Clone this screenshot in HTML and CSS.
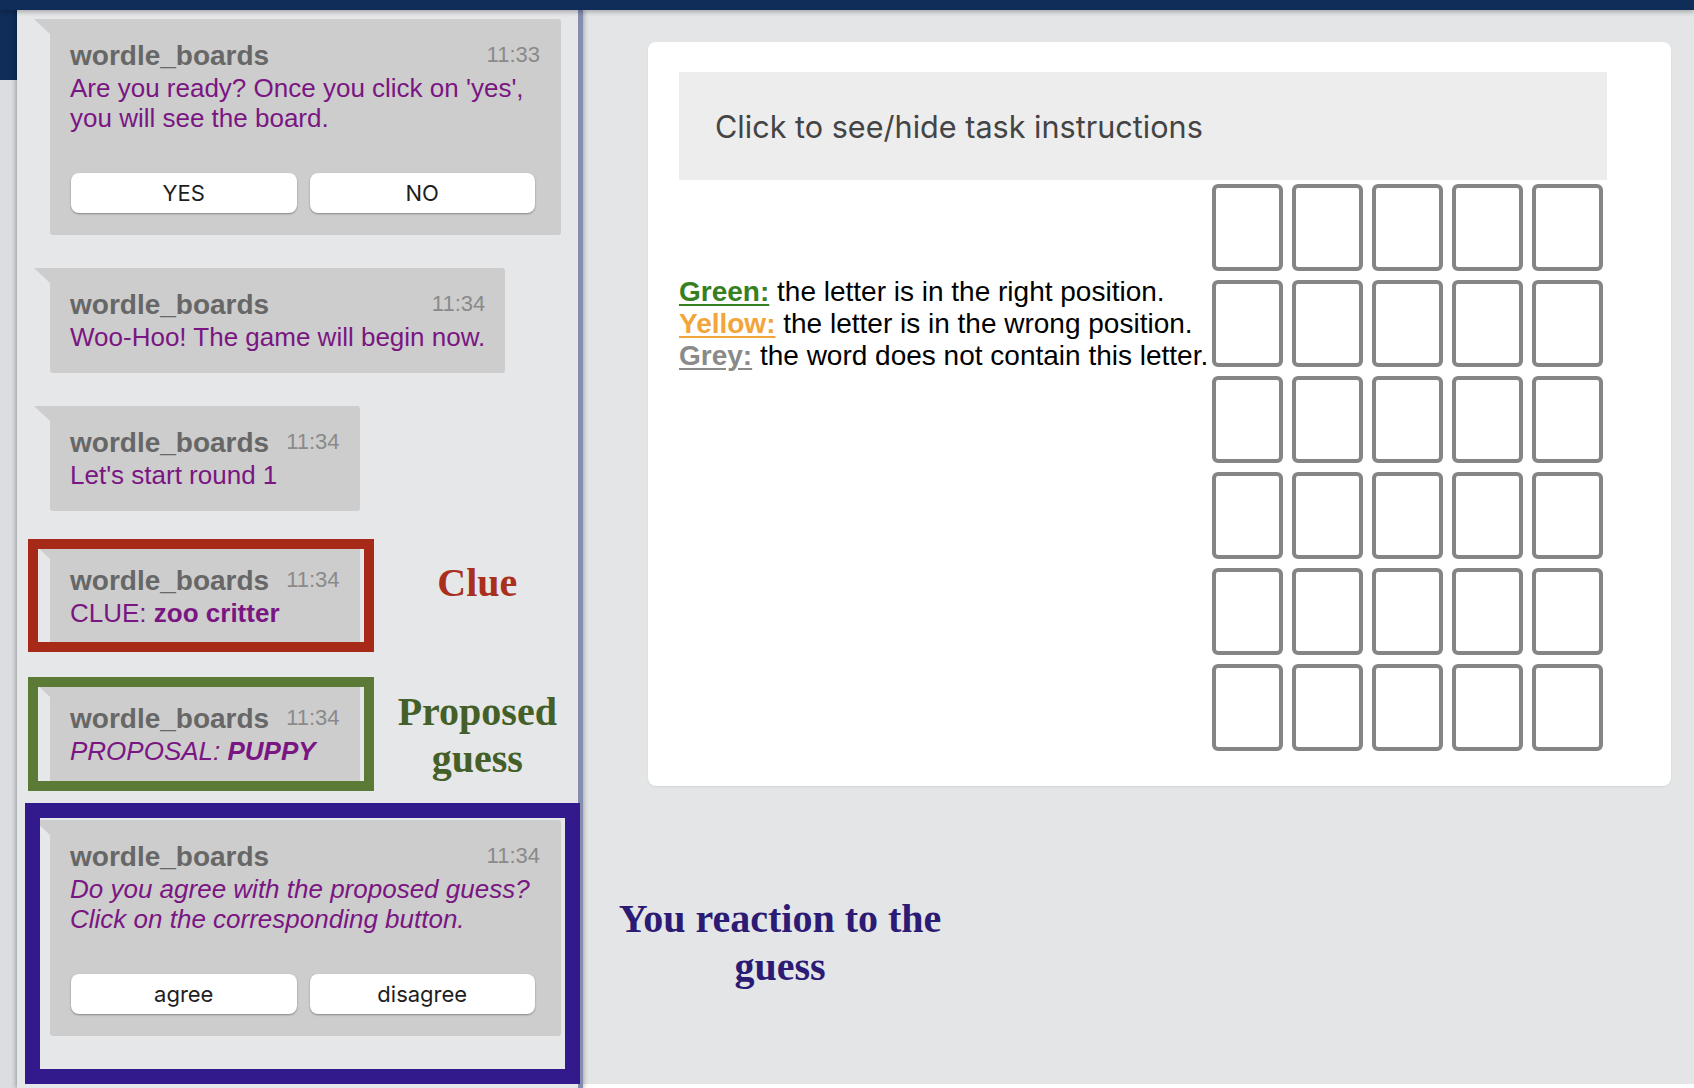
FILE: index.html
```html
<!DOCTYPE html>
<html lang="en">
<head>
<meta charset="utf-8">
<title>wordle_boards</title>
<link rel="stylesheet" href="styles.css">
</head>
<body>
<div class="topbar"></div>
<div class="layout">
  <div class="rail"><div class="rail-top"></div></div>
  <aside class="chat">
    <div class="msg">
      <div class="bubble full">
        <div class="head"><span class="name">wordle_boards</span><span class="time">11:33</span></div>
        <div class="text">Are you ready? Once you click on 'yes', you will see the board.</div>
        <div class="btns"><button class="btn">YES</button><button class="btn">NO</button></div>
      </div>
    </div>
    <div class="msg">
      <div class="bubble">
        <div class="head"><span class="name">wordle_boards</span><span class="time">11:34</span></div>
        <div class="text">Woo-Hoo! The game will begin now.</div>
      </div>
    </div>
    <div class="msg">
      <div class="bubble">
        <div class="head"><span class="name">wordle_boards</span><span class="time">11:34</span></div>
        <div class="text">Let's start round 1</div>
      </div>
    </div>
    <div class="msg">
      <div class="bubble">
        <div class="head"><span class="name">wordle_boards</span><span class="time">11:34</span></div>
        <div class="text">CLUE: <b>zoo critter</b></div>
        <div class="annot annot-red"></div>
      </div>
      <div class="label label-clue">Clue</div>
    </div>
    <div class="msg">
      <div class="bubble">
        <div class="head"><span class="name">wordle_boards</span><span class="time">11:34</span></div>
        <div class="text"><i>PROPOSAL: <b>PUPPY</b></i></div>
        <div class="annot annot-green"></div>
      </div>
      <div class="label label-guess">Proposed<br>guess</div>
    </div>
    <div class="msg">
      <div class="bubble full">
        <div class="head"><span class="name">wordle_boards</span><span class="time">11:34</span></div>
        <div class="text"><i>Do you agree with the proposed guess?<br>Click on the corresponding button.</i></div>
        <div class="btns"><button class="btn">agree</button><button class="btn">disagree</button></div>
        <div class="annot annot-blue"></div>
      </div>
    </div>
  </aside>
  <main class="main">
    <section class="card">
      <div class="instr">Click to see/hide task instructions</div>
      <div class="board-row">
        <div class="legend">
          <div><span class="key key-green">Green:</span> the letter is in the right position.</div>
          <div><span class="key key-yellow">Yellow:</span> the letter is in the wrong position.</div>
          <div><span class="key key-grey">Grey:</span> the word does not contain this letter.</div>
        </div>
        <div class="grid">
          <div class="tile"></div><div class="tile"></div><div class="tile"></div><div class="tile"></div><div class="tile"></div>
          <div class="tile"></div><div class="tile"></div><div class="tile"></div><div class="tile"></div><div class="tile"></div>
          <div class="tile"></div><div class="tile"></div><div class="tile"></div><div class="tile"></div><div class="tile"></div>
          <div class="tile"></div><div class="tile"></div><div class="tile"></div><div class="tile"></div><div class="tile"></div>
          <div class="tile"></div><div class="tile"></div><div class="tile"></div><div class="tile"></div><div class="tile"></div>
          <div class="tile"></div><div class="tile"></div><div class="tile"></div><div class="tile"></div><div class="tile"></div>
        </div>
      </div>
    </section>
    <div class="note">You reaction to the<br>guess</div>
  </main>
</div>
</body>
</html>
```

FILE: styles.css
```css
* { box-sizing: border-box; }

html, body {
  margin: 0;
  padding: 0;
}

body {
  width: 1694px;
  height: 1088px;
  overflow: hidden;
  background: #e4e5e7;
  font-family: "Liberation Sans", Arial, Helvetica, sans-serif;
}

.topbar {
  position: relative;
  z-index: 3;
  height: 10px;
  background: #102d5a;
  box-shadow: 0 2px 5px rgba(0, 0, 0, 0.28);
}

.layout {
  display: flex;
  height: 1078px;
}

.rail {
  width: 17px;
  flex: none;
  background: #dcdde0;
}

.rail-top {
  height: 70px;
  background: #102d5a;
}

.chat {
  position: relative;
  z-index: 1;
  width: 566px;
  flex: none;
  height: 100%;
  padding: 9px 17px 0 33px;
  background: #e6e7e9;
  border-right: 5px solid #858cae;
  box-shadow: -2px 0 4px rgba(0, 0, 0, 0.22), 2px 0 4px rgba(0, 0, 0, 0.18);
}

.msg {
  display: flex;
  align-items: flex-start;
  margin-bottom: 33px;
}

.bubble {
  position: relative;
  background: #cdcdcd;
  border-radius: 0 3px 3px 3px;
  padding: 21px 20px 21px 20px;
}

.bubble::before {
  content: "";
  position: absolute;
  left: -16px;
  top: 0;
  width: 0;
  height: 0;
  border-top: 15px solid #cdcdcd;
  border-left: 16px solid transparent;
}

.bubble.full {
  width: 100%;
  padding-right: 21px;
  padding-bottom: 22px;
}

.head {
  display: flex;
  justify-content: space-between;
  align-items: flex-start;
  gap: 17px;
  height: 32px;
}

.name {
  font-size: 28px;
  line-height: 32px;
  font-weight: bold;
  color: #676767;
  white-space: nowrap;
}

.time {
  font-size: 22px;
  line-height: 29px;
  color: #8a8a8a;
}

.text {
  margin-top: 1px;
  font-size: 26px;
  line-height: 30px;
  color: #7a1682;
}

.btns {
  display: flex;
  gap: 13px;
  margin-top: 40px;
  padding: 0 5px 0 1px;
}

.btn {
  flex: 1;
  height: 40px;
  border: none;
  border-radius: 8px;
  background: #ffffff;
  box-shadow: 0 1px 2px rgba(0, 0, 0, 0.35);
  font-family: Inter, "Noto Sans", sans-serif;
  font-size: 22px;
  color: #1e1e1e;
  padding: 0;
}

.annot {
  position: absolute;
  pointer-events: none;
}

.annot-red {
  top: -5px;
  left: -22px;
  right: -14px;
  bottom: -3px;
  border: 10px solid #a72a19;
}

.annot-green {
  top: -5px;
  left: -22px;
  right: -14px;
  bottom: -4px;
  border: 10px solid #5b7a35;
}

.annot-blue {
  top: -17px;
  left: -25px;
  right: -19px;
  bottom: -48px;
  border: 15px solid #331a8c;
}

.label {
  flex: 1;
  padding-left: 34px;
  text-align: center;
  font-family: "Liberation Serif", "Times New Roman", serif;
  font-weight: bold;
  font-size: 40px;
}

.label-clue {
  margin-top: 16px;
  line-height: 46px;
  color: #a8301d;
}

.label-guess {
  margin-top: 6px;
  line-height: 47px;
  color: #445f27;
}

.main {
  flex: 1;
  padding: 32px 23px 0 65px;
  box-shadow: inset 0 -4px 0 #ffffff;
}

.card {
  background: #ffffff;
  border-radius: 8px;
  box-shadow: 0 1px 2px rgba(0, 0, 0, 0.08);
  padding: 30px 64px 35px 31px;
}

.instr {
  height: 108px;
  display: flex;
  align-items: center;
  padding-left: 36px;
  background: #ededed;
  font-family: Inter, "Noto Sans", sans-serif;
  font-size: 30.6px;
  color: #444444;
}

.board-row {
  display: flex;
  align-items: flex-start;
  margin-top: 4px;
}

.legend {
  margin-top: 92px;
  font-size: 28px;
  line-height: 32px;
  color: #000000;
  white-space: nowrap;
}

.key {
  font-weight: bold;
  text-decoration: underline;
  text-underline-offset: 3px;
}

.key-green { color: #35801f; }
.key-yellow { color: #f2a53a; }
.key-grey { color: #8a8a8a; }

.grid {
  margin-left: auto;
  margin-right: 4px;
  display: grid;
  grid-template-columns: repeat(5, 71px);
  grid-auto-rows: 87px;
  gap: 9px;
}

.tile {
  border: 4px solid #858585;
  border-radius: 6px;
}

.note {
  width: 360px;
  margin: 109px 0 0 -48px;
  text-align: center;
  font-family: "Liberation Serif", "Times New Roman", serif;
  font-weight: bold;
  font-size: 40px;
  line-height: 48px;
  color: #2c1b74;
}
```
